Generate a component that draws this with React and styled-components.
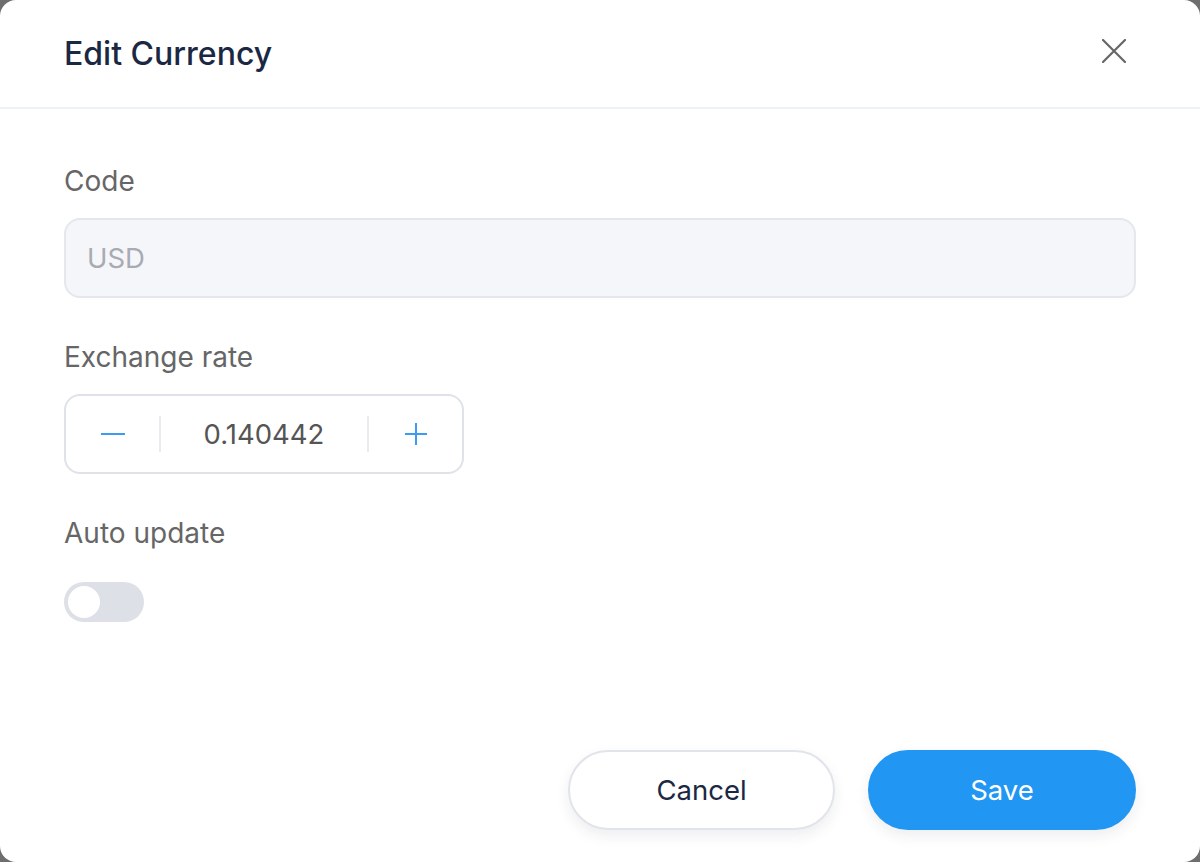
import React, { useState } from 'react';
import styled, { createGlobalStyle } from 'styled-components';

const Global = createGlobalStyle`
  html, body {
    margin: 0;
    padding: 0;
    background: #6e6e6e;
  }
  * { box-sizing: border-box; }
`;

const Dialog = styled.div`
  font-family: Inter, "Liberation Sans", sans-serif;
  width: 1200px;
  height: 862px;
  background: #fff;
  border-radius: 16px;
  display: flex;
  flex-direction: column;
  overflow: hidden;
`;

const Header = styled.div`
  height: 109px;
  padding: 0 74px 0 64px;
  display: flex;
  align-items: center;
  justify-content: space-between;
  border-bottom: 2px solid #eef1f5;
`;

const Title = styled.h1`
  margin: 0;
  font-size: 32px;
  font-weight: 500;
  color: #1b2843;
`;

const CloseButton = styled.button`
  border: 0;
  background: none;
  padding: 0;
  width: 24px;
  height: 24px;
  margin-bottom: 5px;
  display: flex;
  align-items: center;
  justify-content: center;
  cursor: pointer;
`;

const Body = styled.div`
  flex: 1;
  padding: 54px 64px 0;
  display: flex;
  flex-direction: column;
`;

const Label = styled.div`
  font-size: 28px;
  color: #666;
  line-height: 36px;
  margin-bottom: 19px;
`;

const Field = styled.div`
  margin-bottom: 41px;
`;

const TextInput = styled.input`
  width: 100%;
  height: 80px;
  border: 2px solid #e4e7ec;
  border-radius: 16px;
  background: #f5f6fa;
  padding: 0 21px;
  font-family: inherit;
  font-size: 27.5px;
  color: #a8abb2;
  outline: none;
`;

const Stepper = styled.div`
  width: 400px;
  height: 80px;
  border: 2px solid #dfe2e8;
  border-radius: 16px;
  display: flex;
  align-items: center;
`;

const StepButton = styled.button`
  width: 93px;
  height: 100%;
  border: 0;
  background: none;
  padding: 0;
  display: flex;
  align-items: center;
  justify-content: center;
  cursor: pointer;
`;

const Divider = styled.span`
  width: 2px;
  height: 36px;
  background: #e8ebf0;
`;

const Value = styled.div`
  flex: 1;
  text-align: center;
  font-size: 27.5px;
  color: #555;
`;

const Toggle = styled.button`
  width: 80px;
  height: 40px;
  border-radius: 20px;
  border: 0;
  padding: 4px;
  background: ${p => (p.$on ? '#2196f3' : '#dde0e7')};
  display: flex;
  justify-content: ${p => (p.$on ? 'flex-end' : 'flex-start')};
  cursor: pointer;
  margin-top: 31px;
`;

const Knob = styled.span`
  width: 32px;
  height: 32px;
  border-radius: 50%;
  background: #fff;
`;

const Footer = styled.div`
  display: flex;
  justify-content: flex-end;
  gap: 33px;
  padding: 0 64px 32px;
`;

const Button = styled.button`
  width: ${p => p.$w}px;
  height: 80px;
  border-radius: 40px;
  font-family: inherit;
  font-size: 27.5px;
  cursor: pointer;
  border: 2px solid ${p => (p.$primary ? '#2196f3' : '#e1e4ea')};
  background: ${p => (p.$primary ? '#2196f3' : '#fff')};
  color: ${p => (p.$primary ? '#fff' : '#1b2843')};
  box-shadow: 0 6px 14px rgba(30, 40, 70, 0.08);
`;

export default function App() {
  const [on, setOn] = useState(false);
  return (
    <>
      <Global />
      <Dialog>
        <Header>
          <Title>Edit Currency</Title>
          <CloseButton aria-label="Close">
            <svg width="24" height="24" viewBox="0 0 24 24">
              <path d="M1 1 L23 23 M23 1 L1 23" stroke="#666" strokeWidth="2.2" strokeLinecap="round" />
            </svg>
          </CloseButton>
        </Header>
        <Body>
          <Field>
            <Label>Code</Label>
            <TextInput value="USD" disabled readOnly />
          </Field>
          <Field>
            <Label>Exchange rate</Label>
            <Stepper>
              <StepButton aria-label="Decrease">
                <svg width="26" height="26" viewBox="0 0 26 26">
                  <path d="M1 13 H25" stroke="#3d9cf2" strokeWidth="2" />
                </svg>
              </StepButton>
              <Divider />
              <Value>0.140442</Value>
              <Divider />
              <StepButton aria-label="Increase">
                <svg width="26" height="26" viewBox="0 0 26 26">
                  <path d="M2 13 H24 M13 2 V24" stroke="#3d9cf2" strokeWidth="2" />
                </svg>
              </StepButton>
            </Stepper>
          </Field>
          <Field>
            <Label>Auto update</Label>
            <Toggle $on={on} onClick={() => setOn(!on)} aria-label="Auto update">
              <Knob />
            </Toggle>
          </Field>
        </Body>
        <Footer>
          <Button $w={267}>Cancel</Button>
          <Button $w={268} $primary>Save</Button>
        </Footer>
      </Dialog>
    </>
  );
}
